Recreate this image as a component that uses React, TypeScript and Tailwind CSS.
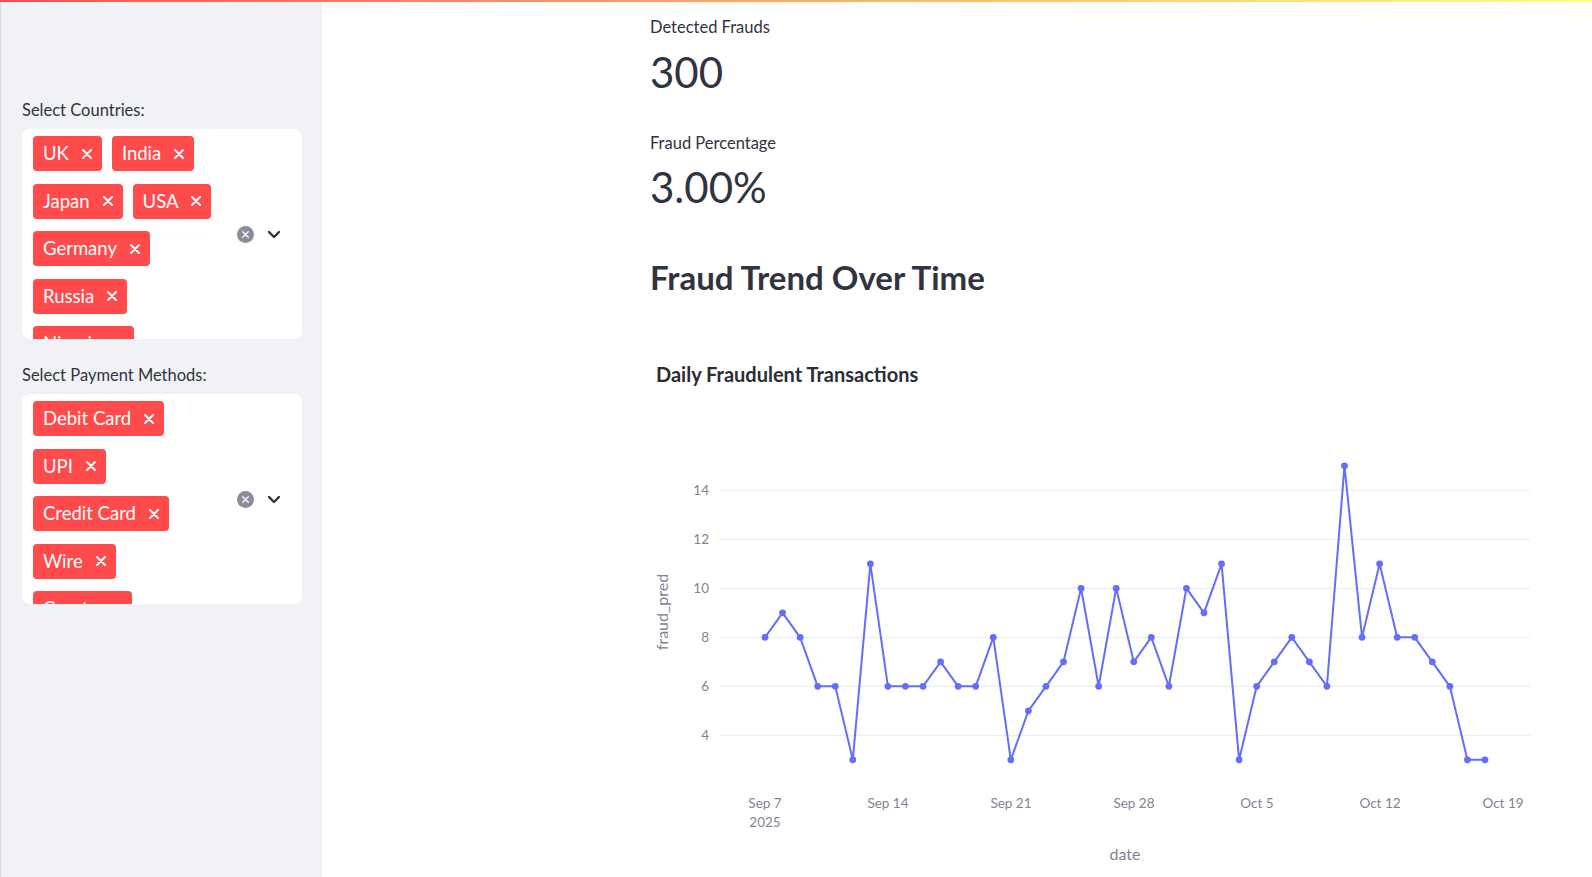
import React from 'react';

const countryRows = [['UK', 'India'], ['Japan', 'USA'], ['Germany'], ['Russia'], ['Nigeria']];
const methodRows = [['Debit Card'], ['UPI'], ['Credit Card'], ['Wire'], ['Crypto']];

const daily = [8, 9, 8, 6, 6, 3, 11, 6, 6, 6, 7, 6, 6, 8, 3, 5, 6, 7, 10, 6, 10, 7, 8, 6, 10, 9, 11, 3, 6, 7, 8, 7, 6, 15, 8, 11, 8, 8, 7, 6, 3, 3];

const xOf = (i: number) => 765 + i * 17.56;
const yOf = (v: number) => 735.3 - (v - 4) * 24.5;

const CloseX = ({ size = 9, color = 'white', width = 2 }: { size?: number; color?: string; width?: number }) => (
  <svg width={size} height={size} viewBox="0 0 10 10">
    <path d="M1 1 L9 9 M9 1 L1 9" stroke={color} strokeWidth={width} strokeLinecap="round" />
  </svg>
);

const Tag = ({ label }: { label: string }) => (
  <div className="flex items-center h-[35px] rounded-[4px] bg-[#ff4b4b] pl-[10px] pr-[10px] text-white text-[18.5px] shrink-0">
    <span className="leading-none">{label}</span>
    <span className="ml-[13px] flex items-center">
      <CloseX size={10} width={2} />
    </span>
  </div>
);

const MultiSelect = ({ label, rows }: { label: string; rows: string[][] }) => (
  <div>
    <div className="text-[16.5px] leading-[24px] text-[#31333f]">{label}</div>
    <div className="mt-[7px] h-[210px] bg-white rounded-[8px] flex overflow-hidden">
      <div className="w-[214px] pl-[11px] pt-[7px] flex flex-col gap-y-[12.5px]">
        {rows.map((r, i) => (
          <div key={i} className="flex gap-x-[10px]">
            {r.map(t => (
              <Tag key={t} label={t} />
            ))}
          </div>
        ))}
      </div>
      <div className="flex-1 flex items-center">
        <div className="w-[17px] h-[17px] rounded-full bg-[#8b8d9b] flex items-center justify-center ml-[1px]">
          <CloseX size={7} width={1.8} />
        </div>
        <svg className="ml-[13px]" width="14" height="9" viewBox="0 0 14 9">
          <path d="M2 2 L7 7 L12 2" stroke="#31333f" strokeWidth="2.4" fill="none" strokeLinecap="round" strokeLinejoin="round" />
        </svg>
      </div>
    </div>
  </div>
);

const Chart = () => {
  const ticks = [4, 6, 8, 10, 12, 14];
  const xTicks = ['Sep 7', 'Sep 14', 'Sep 21', 'Sep 28', 'Oct 5', 'Oct 12', 'Oct 19'];
  const pts = daily.map((v, i) => `${xOf(i)},${yOf(v)}`).join(' ');
  return (
    <svg className="block mt-[2px]" width={900} height={485} viewBox="650 390 900 485" style={{ fontFamily: 'Lato, sans-serif' }}>
      {ticks.map(t => (
        <g key={t}>
          <line x1={720} x2={1530} y1={yOf(t)} y2={yOf(t)} stroke="#e6eaf1" strokeWidth={1} />
          <text x={709} y={yOf(t) + 5} textAnchor="end" fontSize={13.5} fill="#808495">
            {t}
          </text>
        </g>
      ))}
      {xTicks.map((t, i) => (
        <text key={t} x={765 + i * 123} y={808} textAnchor="middle" fontSize={13.5} fill="#808495">
          {t}
        </text>
      ))}
      <text x={765} y={827} textAnchor="middle" fontSize={13.5} fill="#808495">
        2025
      </text>
      <text x={1125} y={860} textAnchor="middle" fontSize={16} fill="#808495">
        date
      </text>
      <text x={0} y={0} transform="translate(668 612) rotate(-90)" textAnchor="middle" fontSize={16} fill="#808495">
        fraud_pred
      </text>
      <polyline points={pts} fill="none" stroke="#636efa" strokeWidth={2} strokeLinejoin="round" />
      {daily.map((v, i) => (
        <circle key={i} cx={xOf(i)} cy={yOf(v)} r={3.4} fill="#636efa" />
      ))}
    </svg>
  );
};

export default function App() {
  return (
    <div className="w-[1592px] h-[877px] overflow-hidden bg-white text-[#31333f]" style={{ fontFamily: 'Lato, "Open Sans", sans-serif' }}>
      <div className="h-[2px] bg-gradient-to-r from-[#ff4b4b] to-[#fffd80]" />
      <div className="flex h-[875px]">
        <aside className="w-[322px] bg-[#f0f2f6] border-l border-[#d6d8de] pl-[21px] pr-[20px] pt-[96px] flex flex-col gap-[24px]">
          <MultiSelect label="Select Countries:" rows={countryRows} />
          <MultiSelect label="Select Payment Methods:" rows={methodRows} />
        </aside>
        <main className="flex-1">
          <div className="ml-[328px] w-[900px]">
            <div className="pt-[12.5px] text-[16.5px] leading-[24px]">Detected Frauds</div>
            <div className="mt-[7px] text-[42px] leading-[52px]">300</div>
            <div className="mt-[33px] text-[16.5px] leading-[24px]">Fraud Percentage</div>
            <div className="mt-[6px] text-[42px] leading-[52px]">3.00%</div>
            <h3 className="mt-[42px] text-[33px] leading-[44px] font-bold">Fraud Trend Over Time</h3>
            <div className="mt-[61px] ml-[6px] text-[20px] leading-[28px] font-bold text-[#2a2c36]">Daily Fraudulent Transactions</div>
            <Chart />
          </div>
        </main>
      </div>
    </div>
  );
}
